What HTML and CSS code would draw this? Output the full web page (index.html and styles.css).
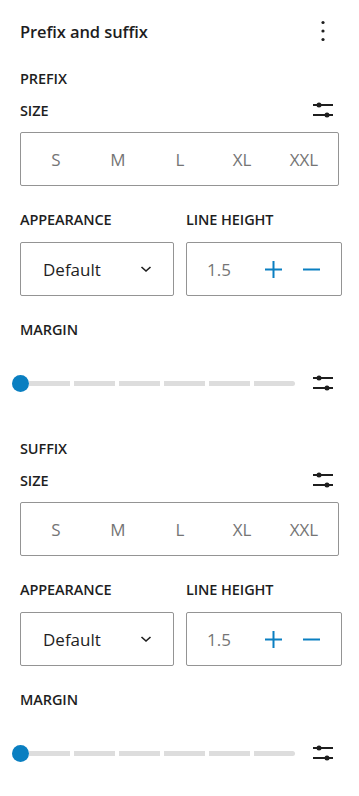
FILE: index.html
```html
<!DOCTYPE html>
<html>
<head>
<meta charset="utf-8">
<link rel="stylesheet" href="styles.css">
</head>
<body>
<div class="panel">
  <div class="header">
    <h2 class="title">Prefix and suffix</h2>
    <svg class="kebab" width="24" height="24" viewBox="0 0 24 24"><circle cx="12" cy="3.5" r="1.6"/><circle cx="12" cy="12" r="1.6"/><circle cx="12" cy="20.5" r="1.6"/></svg>
  </div>

  <section class="group">
    <div class="label-row first">PREFIX</div>
    <div class="label-row with-icon"><span>SIZE</span>
      <svg class="tune" width="20" height="20" viewBox="0 0 20 20"><path d="M0 5h20M0 15h20" stroke="#1e1e1e" stroke-width="2"/><circle cx="6" cy="5" r="2.5"/><circle cx="14" cy="15" r="2.5"/></svg>
    </div>
    <div class="sizes">
      <span>S</span><span>M</span><span>L</span><span>XL</span><span>XXL</span>
    </div>
    <div class="two-col labels">
      <div class="label-row">APPEARANCE</div>
      <div class="label-row">LINE HEIGHT</div>
    </div>
    <div class="two-col">
      <div class="box select"><span>Default</span>
        <svg width="14" height="14" viewBox="0 0 14 14"><path d="M2.5 5l4.5 4 4.5-4" fill="none" stroke="#1e1e1e" stroke-width="1.6"/></svg>
      </div>
      <div class="box number"><span class="val">1.5</span>
        <svg class="pm" width="17" height="17" viewBox="0 0 17 17"><path d="M8.5 0v17M0 8.5h17" stroke="#0a7fc1" stroke-width="2"/></svg>
        <svg class="pm" width="17" height="17" viewBox="0 0 17 17"><path d="M0 8.5h17" stroke="#0a7fc1" stroke-width="2"/></svg>
      </div>
    </div>
    <div class="label-row margin-label">MARGIN</div>
    <div class="slider-row">
      <div class="slider">
        <span class="knob"></span>
        <span class="seg"></span><span class="seg"></span><span class="seg"></span><span class="seg"></span><span class="seg"></span><span class="seg last"></span>
      </div>
      <svg class="tune" width="20" height="20" viewBox="0 0 20 20"><path d="M0 5h20M0 15h20" stroke="#1e1e1e" stroke-width="2"/><circle cx="6" cy="5" r="2.5"/><circle cx="14" cy="15" r="2.5"/></svg>
    </div>
  </section>

  <section class="group second">
    <div class="label-row first">SUFFIX</div>
    <div class="label-row with-icon"><span>SIZE</span>
      <svg class="tune" width="20" height="20" viewBox="0 0 20 20"><path d="M0 5h20M0 15h20" stroke="#1e1e1e" stroke-width="2"/><circle cx="6" cy="5" r="2.5"/><circle cx="14" cy="15" r="2.5"/></svg>
    </div>
    <div class="sizes">
      <span>S</span><span>M</span><span>L</span><span>XL</span><span>XXL</span>
    </div>
    <div class="two-col labels">
      <div class="label-row">APPEARANCE</div>
      <div class="label-row">LINE HEIGHT</div>
    </div>
    <div class="two-col">
      <div class="box select"><span>Default</span>
        <svg width="14" height="14" viewBox="0 0 14 14"><path d="M2.5 5l4.5 4 4.5-4" fill="none" stroke="#1e1e1e" stroke-width="1.6"/></svg>
      </div>
      <div class="box number"><span class="val">1.5</span>
        <svg class="pm" width="17" height="17" viewBox="0 0 17 17"><path d="M8.5 0v17M0 8.5h17" stroke="#0a7fc1" stroke-width="2"/></svg>
        <svg class="pm" width="17" height="17" viewBox="0 0 17 17"><path d="M0 8.5h17" stroke="#0a7fc1" stroke-width="2"/></svg>
      </div>
    </div>
    <div class="label-row margin-label">MARGIN</div>
    <div class="slider-row">
      <div class="slider">
        <span class="knob"></span>
        <span class="seg"></span><span class="seg"></span><span class="seg"></span><span class="seg"></span><span class="seg"></span><span class="seg last"></span>
      </div>
      <svg class="tune" width="20" height="20" viewBox="0 0 20 20"><path d="M0 5h20M0 15h20" stroke="#1e1e1e" stroke-width="2"/><circle cx="6" cy="5" r="2.5"/><circle cx="14" cy="15" r="2.5"/></svg>
    </div>
  </section>
</div>
</body>
</html>
```
FILE: styles.css
```css
* { box-sizing: border-box; }
html, body { margin: 0; padding: 0; background: #fff; }
body {
  font-family: "Open Sans", "Noto Sans", sans-serif;
  color: #1e1e1e;
  width: 359px;
}
.panel { padding: 0 20px; }
.header {
  height: 62px;
  display: flex;
  align-items: center;
  justify-content: space-between;
}
.title {
  margin: 0;
  font-size: 16.5px;
  font-weight: 600;
  letter-spacing: -0.1px;
}
.kebab { fill: #1e1e1e; margin-right: 4px; }
.label-row {
  height: 32px;
  display: flex;
  align-items: center;
  font-size: 14.5px;
  font-weight: 600;
  letter-spacing: -0.1px;
}
.with-icon { justify-content: space-between; }
.tune { fill: #1e1e1e; margin-right: 6px; flex: none; }
.sizes {
  margin-top: 6px;
  height: 54px;
  border: 1px solid #949494;
  border-radius: 2px;
  display: grid;
  grid-template-columns: repeat(5, 62px);
  align-items: center;
  padding: 0 0 0 4px;
  font-size: 17px;
  color: #757575;
  text-align: center;
}
.two-col {
  display: grid;
  grid-template-columns: 154px 1fr;
  gap: 12px;
}
.labels { margin-top: 17px; }
.box {
  margin-top: 7px;
  height: 54px;
  border: 1px solid #949494;
  border-radius: 2px;
  display: flex;
  align-items: center;
  font-size: 17px;
}
.select { padding: 0 20px 0 22px; justify-content: space-between; }
.number { padding: 0 0 0 20px; }
.val { color: #757575; width: 58px; }
.pm { margin-right: 21px; flex: none; }
.margin-label { margin-top: 17px; }
.slider-row {
  margin-top: 22px;
  height: 32px;
  display: flex;
  align-items: center;
  justify-content: space-between;
}
.slider {
  display: flex;
  align-items: center;
  margin-left: -8px;
  width: 283px;
}
.knob {
  width: 17px;
  height: 17px;
  border-radius: 50%;
  background: #0a7fc1;
  flex: none;
}
.seg {
  height: 5px;
  flex: 1;
  background: #dddddd;
  margin-left: 4px;
}
.knob + .seg { margin-left: 0; }
.seg.last { border-radius: 0 3px 3px 0; }
.group.second { margin-top: 33px; }
```
